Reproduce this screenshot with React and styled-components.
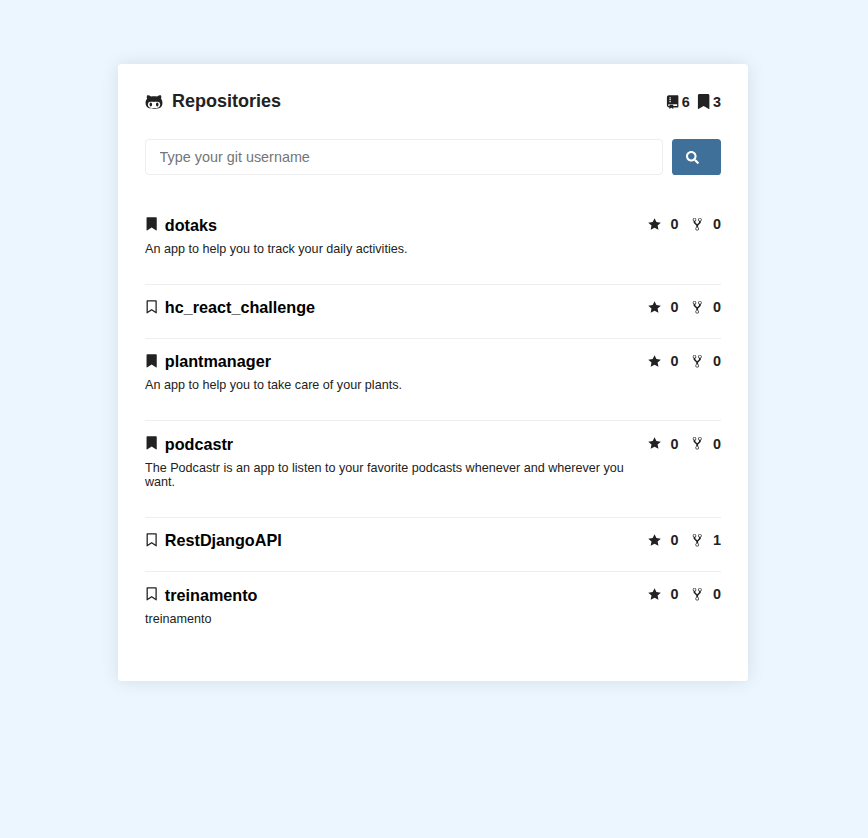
import React from "react";
import styled, { createGlobalStyle } from "styled-components";
import { FaGithubAlt, FaSearch, FaBookmark } from "react-icons/fa";
import { RiGitRepositoryFill, RiBookmarkFill, RiBookmarkLine } from "react-icons/ri";

const GlobalStyle = createGlobalStyle`
  * { box-sizing: border-box; margin: 0; padding: 0; }
  body {
    background: #ebf6ff;
    color: #222;
    font-family: "Liberation Sans", Arial, sans-serif;
    font-size: 14.4px;
  }
`;

const Page = styled.div`
  min-height: 100vh;
  padding: 64px 0 0 118px;
`;

const Card = styled.main`
  width: 630px;
  height: 617px;
  padding: 27px;
  background: #fff;
  border-radius: 3.6px;
  box-shadow: 0 0 18px rgba(0, 0, 0, 0.1);
`;

const Header = styled.header`
  display: flex;
  justify-content: space-between;
  align-items: center;
  height: 21px;
`;

const Title = styled.h1`
  display: flex;
  align-items: center;
  font-size: 18px;
  line-height: 21px;

  svg {
    margin: 1px 9px 0 0;
  }
`;

const Totals = styled.div`
  display: flex;
  gap: 6.7px;
  margin-top: 1px;
`;

const Total = styled.span`
  display: flex;
  align-items: center;
  gap: 1.3px;
  height: 16px;
  font-weight: bold;

  svg {
    margin-top: -0.8px;
  }
`;

const Form = styled.form`
  display: flex;
  gap: 9px;
  height: 36px;
  margin-top: 27px;
`;

const Input = styled.input`
  flex: 1;
  min-width: 0;
  padding: 0 13.5px;
  border: 1px solid #eee;
  border-radius: 3.6px;
  font: inherit;
  font-size: 14.4px;
  outline: none;

  &::placeholder {
    color: #757575;
  }
`;

const SubmitButton = styled.button`
  display: flex;
  align-items: center;
  width: 49px;
  padding: 0 13.5px;
  border: 0;
  border-radius: 3.6px;
  background: #3e7099;
  color: #fff;
`;

const List = styled.ul`
  margin-top: 27.4px;
  list-style: none;
`;

const Info = styled.div`
  width: 490px;
`;

const Item = styled.li`
  display: flex;
  justify-content: space-between;
  align-items: flex-start;
  padding: 13.5px 0 ${(p) => (p.$described ? 28.05 : 21.3)}px;

  & + & {
    border-top: 1px solid #eee;
  }

  &:last-child ${Info} {
    padding-top: 0.4px;
  }
`;

const Name = styled.h2`
  display: flex;
  align-items: center;
  height: 18.4px;
  color: #000;
  font-size: 16.2px;

  svg {
    margin: -2.5px 5.3px 0 -0.8px;
    color: #222;
  }
`;

const Description = styled.p`
  margin-top: 7.5px;
  font-size: 12.6px;
  line-height: 14px;
`;

const Stats = styled.div`
  display: flex;
  align-items: center;
  height: 16px;
  margin-top: 0.57px;
  gap: 11px;
`;

const Stat = styled.span`
  display: flex;
  align-items: center;
  gap: 9px;
  font-weight: bold;
`;

const StarIcon = () => (
  <svg width="14.4" height="14.4" viewBox="-0.4 -0.3 14 16" fill="currentColor" overflow="visible">
    <path fillRule="evenodd" d="M14 6l-4.9-.64L7 1 4.9 5.36 0 6l3.6 3.26L2.67 14 7 11.67 11.33 14l-.93-4.74L14 6z" />
  </svg>
);

const ForkIcon = () => (
  <svg width="14.4" height="14.4" viewBox="0 0 10 16" fill="currentColor">
    <path
      fillRule="evenodd"
      d="M8 1a1.993 1.993 0 0 0-1 3.72V6L5 8 3 6V4.72A1.993 1.993 0 0 0 2 1a1.993 1.993 0 0 0-1 3.72V6.5l3 3v1.78A1.993 1.993 0 0 0 5 15a1.993 1.993 0 0 0 1-3.72V9.5l3-3V4.72A1.993 1.993 0 0 0 8 1zM2 4.2C1.34 4.2.8 3.65.8 3c0-.65.55-1.2 1.2-1.2.65 0 1.2.55 1.2 1.2 0 .65-.55 1.2-1.2 1.2zm3 10c-.66 0-1.2-.55-1.2-1.2 0-.65.55-1.2 1.2-1.2.65 0 1.2.55 1.2 1.2 0 .65-.55 1.2-1.2 1.2zm3-10c-.66 0-1.2-.55-1.2-1.2 0-.65.55-1.2 1.2-1.2.65 0 1.2.55 1.2 1.2 0 .65-.55 1.2-1.2 1.2z"
    />
  </svg>
);

const repositories = [
  { name: "dotaks", description: "An app to help you to track your daily activities.", saved: true, stars: 0, forks: 0 },
  { name: "hc_react_challenge", saved: false, stars: 0, forks: 0 },
  { name: "plantmanager", description: "An app to help you to take care of your plants.", saved: true, stars: 0, forks: 0 },
  {
    name: "podcastr",
    description: "The Podcastr is an app to listen to your favorite podcasts whenever and wherever you want.",
    saved: true,
    stars: 0,
    forks: 0,
  },
  { name: "RestDjangoAPI", saved: false, stars: 0, forks: 1 },
  { name: "treinamento", description: "treinamento", saved: false, stars: 0, forks: 0 },
];

export default function App() {
  return (
    <Page>
      <GlobalStyle />
      <Card>
        <Header>
          <Title>
            <FaGithubAlt size={18} />
            Repositories
          </Title>
          <Totals>
            <Total>
              <RiGitRepositoryFill size={15.3} />
              {repositories.length}
            </Total>
            <Total>
              <FaBookmark size={15.3} />
              {repositories.filter((r) => r.saved).length}
            </Total>
          </Totals>
        </Header>
        <Form onSubmit={(e) => e.preventDefault()}>
          <Input type="text" placeholder="Type your git username" />
          <SubmitButton type="submit" aria-label="Search">
            <FaSearch size={13} />
          </SubmitButton>
        </Form>
        <List>
          {repositories.map((repo) => (
            <Item key={repo.name} $described={Boolean(repo.description)}>
              <Info>
                <Name>
                  {repo.saved ? <RiBookmarkFill size={15.3} /> : <RiBookmarkLine size={15.3} />}
                  {repo.name}
                </Name>
                {repo.description && <Description>{repo.description}</Description>}
              </Info>
              <Stats>
                <Stat>
                  <StarIcon />
                  {repo.stars}
                </Stat>
                <Stat>
                  <ForkIcon />
                  {repo.forks}
                </Stat>
              </Stats>
            </Item>
          ))}
        </List>
      </Card>
    </Page>
  );
}
